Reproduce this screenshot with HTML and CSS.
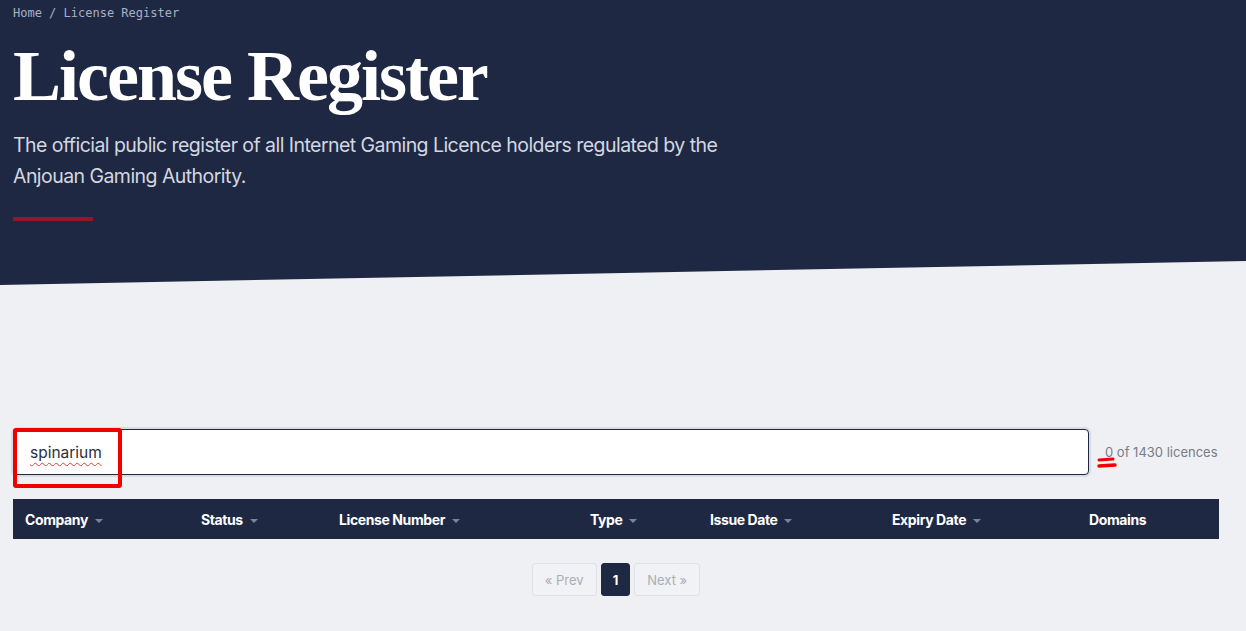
FILE: index.html
```html
<!DOCTYPE html>
<html lang="en">
<head>
  <meta charset="UTF-8">
  <title>License Register</title>
  <link rel="stylesheet" href="styles.css">
</head>
<body>
  <header class="hero">
    <div class="crumbs">Home / License Register</div>
    <h1>License Register</h1>
    <p class="lead">The official public register of all Internet Gaming Licence holders regulated by the Anjouan Gaming Authority.</p>
    <div class="rule"></div>
  </header>

  <main class="register">
    <div class="search-row">
      <div class="search-box">
        <span class="typed">spinarium</span>
        <div class="mark-box"></div>
      </div>
      <div class="count">
        0 of 1430 licences
        <svg class="mark-lines" width="22" height="14" viewBox="0 0 22 14">
          <path d="M3 3 L17 2" stroke="#f20000" stroke-width="3" stroke-linecap="round" fill="none"/>
          <path d="M3 9 L19 8" stroke="#f20000" stroke-width="3.4" stroke-linecap="round" fill="none"/>
        </svg>
      </div>
    </div>

    <table class="licences">
      <thead>
        <tr>
          <th style="width:176px">Company <span class="caret"></span></th>
          <th style="width:138px">Status <span class="caret"></span></th>
          <th style="width:251px">License Number <span class="caret"></span></th>
          <th style="width:120px">Type <span class="caret"></span></th>
          <th style="width:182px">Issue Date <span class="caret"></span></th>
          <th style="width:197px">Expiry Date <span class="caret"></span></th>
          <th>Domains</th>
        </tr>
      </thead>
      <tbody></tbody>
    </table>

    <div class="pager">
      <span class="page-btn off">&laquo; Prev</span>
      <span class="page-btn current">1</span>
      <span class="page-btn off">Next &raquo;</span>
    </div>
  </main>
</body>
</html>
```

FILE: styles.css
```css
body {
  margin: 0;
  background: #eff0f4;
  font-family: Inter, 'Noto Sans', sans-serif;
  color: #222;
}

.hero {
  background: #1f2842;
  height: 285px;
  box-sizing: border-box;
  padding: 5px 13px 0;
  clip-path: polygon(0 0, 100% 0, 100% calc(100% - 24px), 0 100%);
}

.crumbs {
  font-family: 'DejaVu Sans Mono', monospace;
  font-size: 12px;
  line-height: 16px;
  color: #a7b0c2;
}

.hero h1 {
  margin: 15px 0 0;
  font-family: 'Liberation Serif', serif;
  font-weight: bold;
  font-size: 72px;
  line-height: 80px;
  letter-spacing: -2px;
  color: #fff;
}

.lead {
  margin: 14px 0 0;
  max-width: 740px;
  font-size: 19.5px;
  line-height: 31px;
  letter-spacing: -0.55px;
  color: #d3d7e0;
}

.rule {
  width: 80px;
  height: 4px;
  margin-top: 25px;
  background: #8e1a26;
}

.register {
  width: 1206px;
  margin: 144px 0 0 13px;
}

.search-row {
  display: flex;
  align-items: center;
  gap: 16px;
}

.search-box {
  position: relative;
  flex: 1;
  height: 46px;
  box-sizing: border-box;
  padding: 0 16px;
  display: flex;
  align-items: center;
  background: #fff;
  border: 1px solid #1f2842;
  border-radius: 4px;
  box-shadow: 0 0 0 2px #d9dce3;
  font-size: 15.5px;
  color: #2a2f3a;
}

.typed {
  text-decoration: underline wavy #e23b3b;
  text-decoration-thickness: 1px;
  text-underline-offset: 4px;
}

/* hand-drawn highlight over the query */
.mark-box {
  position: absolute;
  left: -1px;
  top: -2px;
  width: 109px;
  height: 60px;
  box-sizing: border-box;
  border: 4px solid #f20000;
  border-radius: 3px;
}

.count {
  position: relative;
  width: 114px;
  font-size: 13px;
  color: #777c86;
  white-space: nowrap;
}

.mark-lines {
  position: absolute;
  left: -9px;
  top: 13px;
}

.licences {
  width: 100%;
  margin-top: 24px;
  border-collapse: collapse;
  table-layout: fixed;
}

.licences th {
  box-sizing: border-box;
  height: 40px;
  padding: 0 12px;
  background: #1f2842;
  color: #fff;
  text-align: left;
  font-size: 14px;
  font-weight: 700;
  letter-spacing: -0.4px;
}

.caret {
  display: inline-block;
  margin-left: 4px;
  vertical-align: middle;
  border-left: 4px solid transparent;
  border-right: 4px solid transparent;
  border-top: 4px solid #7d8396;
}

.pager {
  display: flex;
  justify-content: center;
  gap: 4px;
  margin-top: 24px;
}

.page-btn {
  height: 33px;
  box-sizing: border-box;
  padding: 0 12px;
  display: flex;
  align-items: center;
  font-size: 13px;
  border: 1px solid #dfe1e6;
  border-radius: 3px;
}

.page-btn.off {
  color: #a9adb6;
  background: #f1f2f5;
}

.page-btn.current {
  background: #1f2842;
  border-color: #1f2842;
  color: #fff;
  font-weight: 700;
  padding: 0 11px;
}
```
